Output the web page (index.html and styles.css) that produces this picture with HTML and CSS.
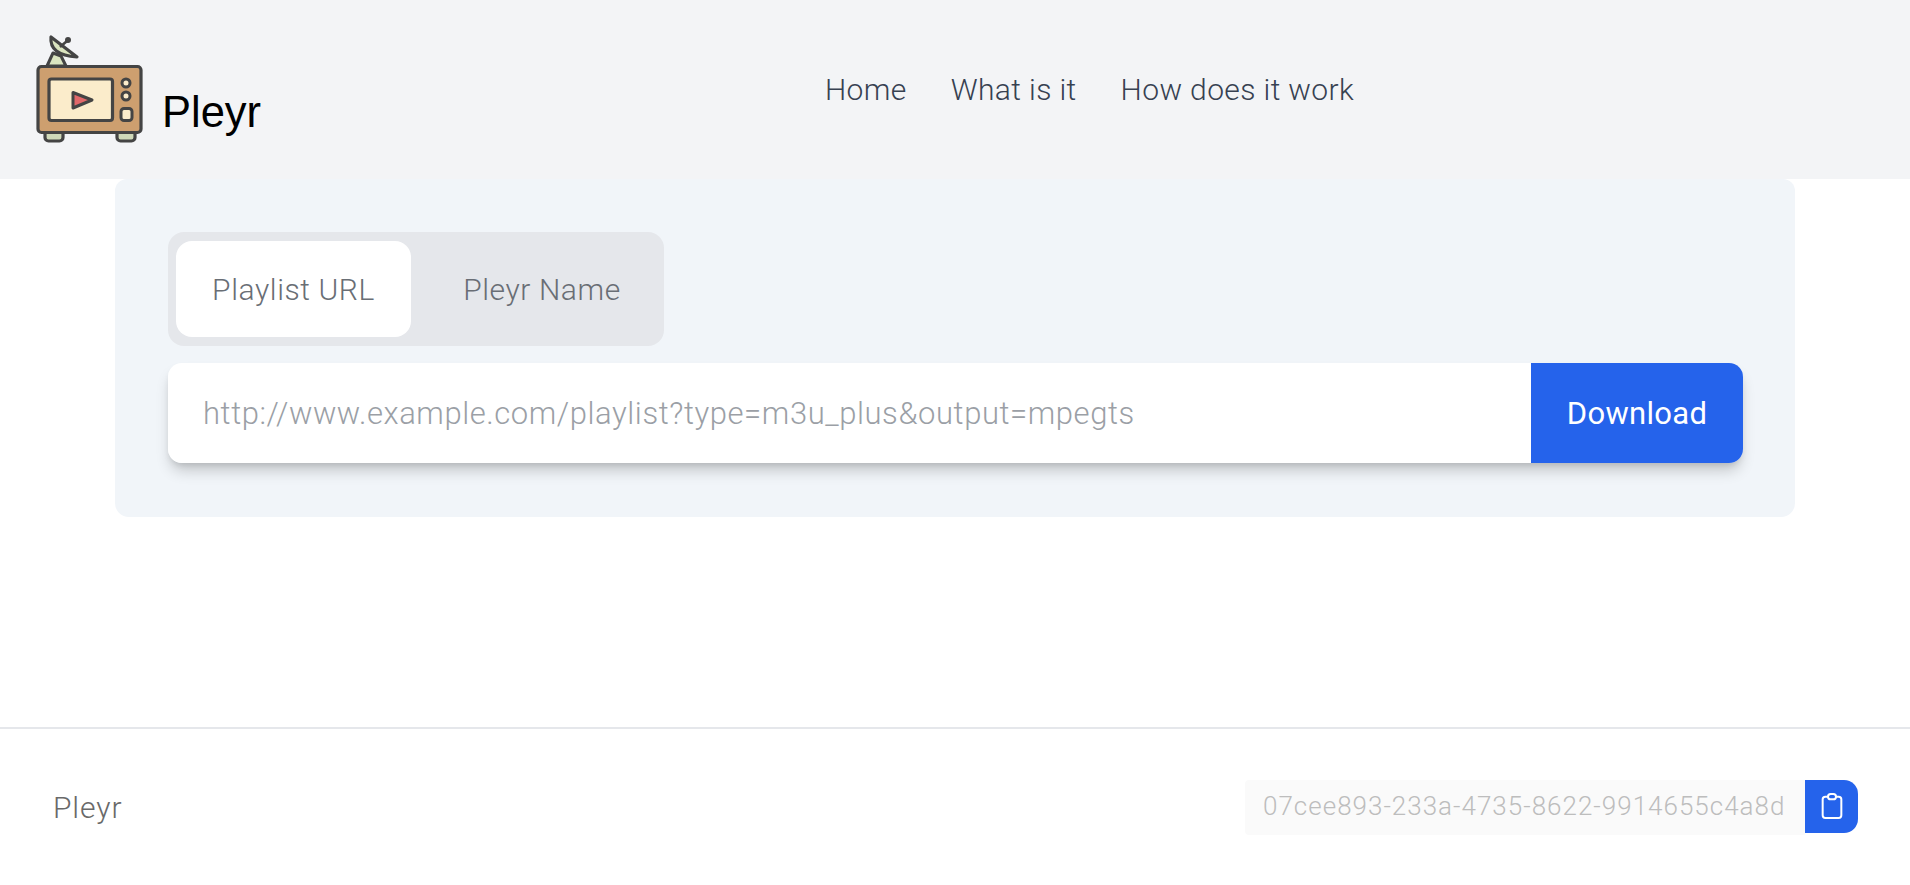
FILE: index.html
```html
<!DOCTYPE html>
<html lang="en">
<head>
<meta charset="utf-8">
<title>Pleyr</title>
<link rel="stylesheet" href="styles.css">
</head>
<body>
<header class="header">
  <a class="brand" href="#">
    <svg class="logo" viewBox="30 30 120 120" width="120" height="120" aria-hidden="true">
      <path d="M47 66 L53 53 L61 56 L66 66 Z" fill="#dbe5c0" stroke="#444" stroke-width="3" stroke-linejoin="round"/>
      <path d="M51 37 Q49 55 77 57 Z" fill="#dbe5c0" stroke="#444" stroke-width="3.2" stroke-linejoin="round"/>
      <path d="M60 47 L67 41" stroke="#444" stroke-width="2.6"/>
      <circle cx="68" cy="40" r="3" fill="#444"/>
      <rect x="45" y="128" width="18" height="13" rx="3.5" fill="#cfd8b8" stroke="#444" stroke-width="3.2"/>
      <rect x="117" y="128" width="18" height="13" rx="3.5" fill="#cfd8b8" stroke="#444" stroke-width="3.2"/>
      <rect x="38" y="66.5" width="103" height="66" rx="3.5" fill="#cd9f6f" stroke="#444" stroke-width="3.2"/>
      <rect x="49" y="79" width="63.5" height="41.5" rx="2.5" fill="#fbeccb" stroke="#444" stroke-width="3.2"/>
      <path d="M73 92.5 L92 100 L73 108 Z" fill="#e2686a" stroke="#444" stroke-width="3" stroke-linejoin="round"/>
      <circle cx="126" cy="83" r="4" fill="#fbeccb" stroke="#444" stroke-width="3"/>
      <circle cx="126" cy="96" r="4" fill="#fbeccb" stroke="#444" stroke-width="3"/>
      <rect x="121" y="108.5" width="11" height="12" rx="3" fill="#fbeccb" stroke="#444" stroke-width="3"/>
    </svg>
    <span class="brand-name">Pleyr</span>
  </a>
  <nav class="nav">
    <a href="#">Home</a>
    <a href="#">What is it</a>
    <a href="#">How does it work</a>
  </nav>
</header>
<main class="card">
  <div class="tabs">
    <button class="tab tab-active">Playlist URL</button>
    <button class="tab">Pleyr Name</button>
  </div>
  <form class="search">
    <input class="search-input" type="text" placeholder="http://www.example.com/playlist?type=m3u_plus&amp;output=mpegts">
    <button class="search-btn" type="button">Download</button>
  </form>
</main>
<footer class="footer">
  <span class="footer-name">Pleyr</span>
  <div class="uuid">
    <span class="uuid-text">07cee893-233a-4735-8622-9914655c4a8d</span>
    <button class="uuid-btn" type="button" aria-label="Copy">
      <svg viewBox="0 0 24 24" width="32" height="32" fill="none" stroke="#fff" stroke-width="1.5" stroke-linecap="round" stroke-linejoin="round"><path d="M9 5H7a2 2 0 0 0-2 2v12a2 2 0 0 0 2 2h10a2 2 0 0 0 2-2V7a2 2 0 0 0-2-2h-2"/><rect x="9" y="3" width="6" height="4" rx="2"/></svg>
    </button>
  </div>
</footer>
</body>
</html>
```
FILE: styles.css
```css
* { box-sizing: border-box; }
html, body { margin: 0; padding: 0; }
body {
  height: 885px;
  overflow: hidden;
  background: #fff;
  font-family: Roboto, "Liberation Sans", sans-serif;
  font-weight: 300;
  display: flex;
  flex-direction: column;
}
a { text-decoration: none; color: inherit; }
.header {
  height: 179px;
  background: #f3f4f6;
  padding: 30px 37px 0 30px;
  display: flex;
  align-items: flex-start;
  flex-shrink: 0;
}
.brand { display: flex; align-items: flex-end; width: 795px; flex-shrink: 0; }
.logo { display: block; flex-shrink: 0; }
.brand-name {
  font-family: "Liberation Sans", sans-serif;
  font-weight: 400;
  font-size: 43.5px;
  line-height: 52px;
  color: #000;
  margin: 0 0 12px 12px;
}
.nav {
  display: flex;
  gap: 44px;
  font-size: 30px;
  line-height: 40px;
  letter-spacing: .38px;
  color: #374151;
  margin-top: 40px;
}
.card {
  width: 1680px;
  height: 338px;
  margin: 0 auto;
  background: #f1f5f9;
  border-radius: 12px 12px 14px 14px;
  padding: 53px 52px 53px 53px;
  flex-shrink: 0;
}
.tabs {
  display: inline-flex;
  width: 496px;
  height: 114px;
  padding: 9px 9px 9px 8px;
  background: #e5e7eb;
  border-radius: 16px;
  vertical-align: top;
}
.tab {
  border: 0;
  background: transparent;
  font: inherit;
  font-size: 30px;
  letter-spacing: .6px;
  color: #696e75;
  height: 96px;
  padding: 0;
  border-radius: 16px;
}
.tab:first-child { width: 235px; }
.tab:last-child { flex: 1; padding-left: 18px; }
.tab-active { background: #fff; }
.search {
  display: flex;
  height: 100px;
  margin-top: 17px;
  border-radius: 14px;
  box-shadow: 0 10px 15px -3px rgba(0,0,0,.2), 0 4px 6px -2px rgba(0,0,0,.1);
}
.search-input {
  flex: 1;
  min-width: 0;
  border: 0;
  outline: 0;
  background: #fff;
  padding: 0 35px;
  font: inherit;
  font-size: 31px;
  letter-spacing: .57px;
  border-radius: 14px 0 0 14px;
}
.search-input::placeholder { color: #9b9fa6; opacity: 1; }
.search-btn {
  width: 212px;
  border: 0;
  background: #2563eb;
  color: #fff;
  font-family: Roboto, "Liberation Sans", sans-serif;
  font-weight: 400;
  font-size: 31px;
  letter-spacing: .3px;
  border-radius: 0 14px 14px 0;
}
.footer {
  margin-top: auto;
  height: 158px;
  border-top: 2px solid #e5e7eb;
  display: flex;
  align-items: center;
  justify-content: space-between;
  padding: 0 52px 0 53px;
  flex-shrink: 0;
}
.footer-name { font-size: 30px; letter-spacing: .9px; color: #696969; }
.uuid { display: flex; align-items: flex-start; }
.uuid-text {
  width: 560px;
  height: 55px;
  padding: 0 18px;
  background: #fafafa;
  color: #bdbdbd;
  font-size: 26px;
  letter-spacing: 1px;
  line-height: 53px;
  white-space: nowrap;
  border-radius: 4px 0 0 4px;
}
.uuid-btn {
  width: 53px;
  height: 53px;
  padding: 0;
  border: 0;
  background: #2563eb;
  border-radius: 0 14px 14px 0;
  display: flex;
  align-items: center;
  justify-content: center;
}
```
